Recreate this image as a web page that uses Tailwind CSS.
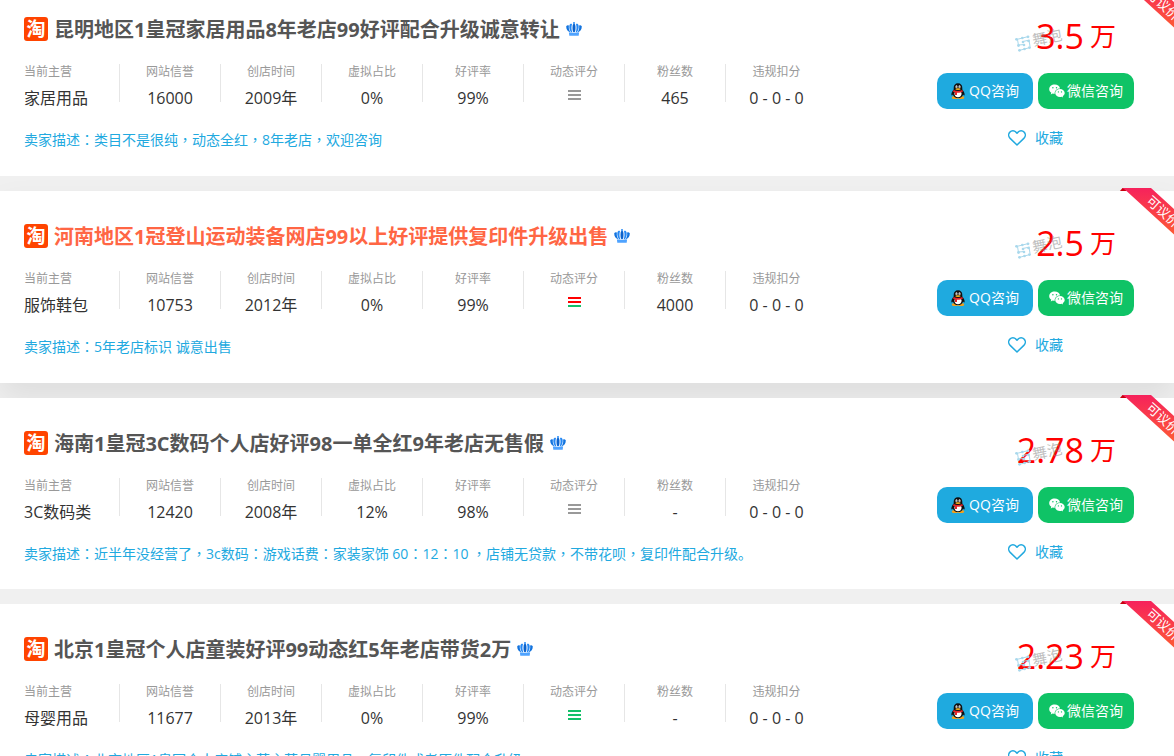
<!DOCTYPE html>
<html lang="zh-CN">
<head>
<meta charset="utf-8">
<meta name="viewport" content="width=device-width, initial-scale=1">
<title>淘宝店铺转让</title>
<script src="https://cdn.jsdelivr.net/npm/@tailwindcss/browser@4"></script>
</head>
<body class="h-screen overflow-hidden bg-[#f0f0f0] font-['Open_Sans','Noto_Sans_CJK_SC',sans-serif] text-[#333]">

<svg class="absolute size-0" aria-hidden="true">
  <symbol id="crown" viewBox="0 0 16 14">
    <path d="M.2 4.300C1.100 3.200 2 3 2.900 3.700 2.500 6.300 3 8.300 4.600 10.200 1.600 9.700.2 7.400.2 4.300zM15.800 4.300c-.9-1.100-1.800-1.300-2.700-.6.4 2.600-.1 4.600-1.700 6.500 3-.5 4.400-2.800 4.400-5.900z" fill="#1273de"/>
    <path d="M3.400 3.500C3.800 2 4.700 1.500 6 2c-.8 3-.7 5.700.3 8.200H5.200C3.600 8.200 3 6 3.400 3.500zM12.600 3.500c-.4-1.500-1.300-2-2.600-1.500.8 3 .7 5.700-.3 8.200h1.100c1.600-2 2.200-4.200 1.800-6.700z" fill="#2488f5"/>
    <ellipse cx="8" cy="6" rx="1.500" ry="4.200" fill="#0b62cc"/>
    <circle cx="8" cy="1.100" r="1" fill="#2488f5"/>
    <path d="M2.900 10.200c1.700.6 8.500.6 10.200 0l-.4 3.500H3.300z" fill="#4fa3ff"/>
  </symbol>
  <symbol id="qq" viewBox="0 0 14 16">
    <ellipse cx="4" cy="14.400" rx="3.200" ry="1.500" fill="#f5a11a"/>
    <ellipse cx="10" cy="14.400" rx="3.200" ry="1.500" fill="#f5a11a"/>
    <path d="M7 .3C4.200.3 2.600 2.400 2.700 5v1.500C1.500 8 .2 10 .4 12c.1.900.9.500 1.500-.6.7 2.400 2.600 3.600 5.100 3.600s4.400-1.200 5.100-3.600c.6 1.100 1.400 1.500 1.500.6.2-2-1.100-4-2.300-5.500V5C11.400 2.400 9.800.3 7 .3z" fill="#101010"/>
    <path d="M7 8.200c-2.200 0-3.600.4-3.600 2.400 0 2.200 1.500 3.700 3.600 3.700s3.600-1.500 3.600-3.700c0-2-1.400-2.400-3.600-2.400z" fill="#fff"/>
    <ellipse cx="5.500" cy="3.700" rx="1" ry="1.500" fill="#fff"/>
    <ellipse cx="8.500" cy="3.700" rx="1" ry="1.500" fill="#fff"/>
    <circle cx="5.800" cy="3.900" r=".5"/><circle cx="8.200" cy="3.900" r=".5"/>
    <ellipse cx="7" cy="6.100" rx="2.700" ry=".9" fill="#f9b21d"/>
    <path d="M2.600 7c2.700 1.300 6.100 1.300 8.800 0l.6 1.500C10.200 9.600 8 9.900 6 9.800v2.100l-2 .1V9.300C3.100 9 2.400 8.700 2 8.400z" fill="#e3252b"/>
  </symbol>
  <symbol id="wechat" viewBox="0 0 16 14">
    <path d="M5.700 .6C2.600.6.200 2.600.2 5.200c0 1.500.8 2.700 2.100 3.600L1.700 10.500l2-1c.7.2 1.400.3 2.100.3-.6-2.800 1.700-5.400 5.300-5.400C10.600 2.200 8.400.6 5.700.6z" fill="#fff"/>
    <path d="M11 5c-2.700 0-4.800 1.700-4.800 4s2.100 4 4.800 4c.6 0 1.100-.1 1.600-.2l1.500.8-.4-1.400c1.200-.8 2-1.900 2-3.200C15.700 6.700 13.600 5 11 5z" fill="#fff"/>
    <g fill="#0fc366"><circle cx="3.900" cy="3.800" r=".75"/><circle cx="7.500" cy="3.800" r=".75"/><circle cx="9.400" cy="7.900" r=".65"/><circle cx="12.500" cy="7.900" r=".65"/></g>
  </symbol>
  <symbol id="heart" viewBox="0 0 18 16">
    <path d="M9 15 1.900 8.100C.3 6.400.3 3.700 1.900 2.100c1.600-1.700 4.400-1.700 6 0L9 3.200l1.100-1.100c1.600-1.700 4.400-1.700 6 0 1.600 1.600 1.600 4.300 0 6z" fill="none" stroke="#21a9df" stroke-width="1.500" stroke-linejoin="round"/>
  </symbol>
  <symbol id="nodes" viewBox="0 0 16 17">
    <g fill="none" stroke="#a9d8ec" stroke-width="1"><path d="M1.500 4.500 13.500 1.500M2.500 4.500l1 6M8 6.500l6.500-1.500M4 10l5-.5M14 5l1 6.500M4 15.500l11-3"/></g>
    <g fill="#a9d8ec"><circle cx="1.500" cy="4.300" r="1.400"/><circle cx="7.300" cy="3" r="1.300"/><circle cx="13" cy="1.800" r="1.400"/><circle cx="8" cy="7" r="1.300"/><circle cx="13.500" cy="6" r="1.300"/><circle cx="3.500" cy="10.500" r="1.400"/><circle cx="9" cy="10" r="1.300"/><circle cx="4.500" cy="15.300" r="1.400"/><circle cx="9.500" cy="14" r="1.300"/><circle cx="14.500" cy="12.600" r="1.400"/></g>
  </symbol>
  <linearGradient id="ribbonFill" x1="0" y1="0" x2="0" y2="1">
    <stop offset="0" stop-color="#f6225c"/><stop offset="1" stop-color="#fd5a35"/>
  </linearGradient>
</svg>

<main id="list" class="-mt-4 flex flex-col gap-[15px]"></main>

<script>
const RED = 'bg-[#ff0000]', GREEN = 'bg-[#13c069]', GRAY = 'bg-[#999]';
const shops = [
  { title: '昆明地区1皇冠家居用品8年老店99好评配合升级诚意转让', price: '3.5', bars: [GRAY, GRAY, GRAY],
    stats: ['家居用品', '16000', '2009年', '0%', '99%', null, '465', '0 - 0 - 0'],
    desc: '类目不是很纯，动态全红，8年老店，欢迎咨询', card: 'pb-[26px]', tone: 'text-[#555]' },
  { title: '河南地区1冠登山运动装备网店99以上好评提供复印件升级出售', price: '2.5', bars: [RED, RED, GREEN],
    stats: ['服饰鞋包', '10753', '2012年', '0%', '99%', null, '4000', '0 - 0 - 0'],
    desc: '5年老店标识 诚意出售', card: 'pb-[26px] shadow-[0_15px_30px_rgba(0,0,0,0.08)]', tone: 'text-[#ff6644]' },
  { title: '海南1皇冠3C数码个人店好评98一单全红9年老店无售假', price: '2.78', bars: [GRAY, GRAY, GRAY],
    stats: ['3C数码类', '12420', '2008年', '12%', '98%', null, '-', '0 - 0 - 0'],
    desc: '近半年没经营了，3c数码：游戏话费：家装家饰 60：12：10 ，店铺无贷款，不带花呗，复印件配合升级。', card: 'pb-[25px]', tone: 'text-[#555]' },
  { title: '北京1皇冠个人店童装好评99动态红5年老店带货2万', price: '2.23', bars: [GREEN, GREEN, GREEN],
    stats: ['母婴用品', '11677', '2013年', '0%', '99%', null, '-', '0 - 0 - 0'],
    desc: '北京地区1皇冠个人店铺主营主营母婴用品，复印件或者原件配合升级', card: 'pb-[26px]', tone: 'text-[#555]' }
];
const labels = ['当前主营', '网站信誉', '创店时间', '虚拟占比', '好评率', '动态评分', '粉丝数', '违规扣分'];

// Colons and commas sit in the middle of their cell.
const centred = s => s.replace(/[：，]/g, m => `<span lang="zh-TW" class="font-['Noto_Sans_CJK_TC'] leading-none">${m}</span>`);

const stat = (shop, i) => `
  <div class="h-[38px] shrink-0 ${i === 0 ? 'w-24 text-left' : 'w-[101px] text-center'} ${i < 7 ? 'border-r border-[#e6e6e6]' : ''}">
    <dt class="text-xs leading-4 text-[#999]">${labels[i]}</dt>
    <dd class="mt-1.5 text-base leading-6 whitespace-nowrap">${shop.stats[i] ?? `
      <span class="flex flex-col items-center gap-0.5 pt-1">${shop.bars.map(c => `<i class="h-0.5 w-[13px] ${c}"></i>`).join('')}</span>`}</dd>
  </div>`;

document.getElementById('list').innerHTML = shops.map(shop => `
<article class="relative flex justify-between bg-white pt-[31px] pr-10 pl-6 ${shop.card}">
  <div class="min-w-0">
    <h2 class="flex h-7 items-center">
      <span class="flex size-6 shrink-0 items-center justify-center rounded-[3px] bg-[#ff4400] text-[19px] leading-6 font-bold text-white">淘</span>
      <a href="#" class="ml-1.5 pt-0.5 text-xl leading-7 font-bold whitespace-nowrap ${shop.tone}">${shop.title}</a>
      <svg class="ml-1.5 h-3.5 w-4 shrink-0"><use href="#crown"/></svg>
    </h2>
    <dl class="mt-[21px] flex">${labels.map((_, i) => stat(shop, i)).join('')}</dl>
    <p class="mt-7 h-5 text-sm leading-5 whitespace-nowrap text-[#21a9df]">${centred('卖家描述：' + shop.desc)}</p>
  </div>
  <div class="flex shrink-0 flex-col">
    <div class="relative flex h-[58px] items-center justify-end gap-1.5 pr-[18px] pb-4 text-[#ff0000]">
      <span class="text-[34px] leading-10">${shop.price}</span>
      <span class="text-[26px] leading-10">万</span>
      <svg class="absolute top-5 left-[78px] h-[17px] w-4"><use href="#nodes"/></svg>
      <span class="absolute top-3 left-[95px] -rotate-12 text-[15px] leading-5 text-[#808080]/50">舞泡</span>
    </div>
    <div class="flex gap-[5px]">
      <button class="flex h-9 w-24 items-center justify-center gap-1 rounded-[10px] bg-[#1faadf] text-sm text-white">
        <svg class="h-4 w-3.5"><use href="#qq"/></svg>QQ咨询</button>
      <button class="flex h-9 w-24 items-center justify-center gap-0.5 rounded-[10px] bg-[#0fc366] text-sm text-white">
        <svg class="h-3.5 w-4"><use href="#wechat"/></svg>微信咨询</button>
    </div>
    <button class="mt-[19px] flex h-5 items-center justify-center gap-[9px] text-sm leading-5 text-[#21a9df]">
      <svg class="h-4 w-[18px]"><use href="#heart"/></svg>收藏</button>
  </div>
  <svg class="absolute -top-[3px] right-0 h-[50px] w-[54px] overflow-hidden" viewBox="0 0 54 50">
    <path d="M0 3 2.500 0H6v3z" fill="#c8000f"/>
    <path d="M2.500 0H31l23 21v25.500L6.500 3z" fill="url(#ribbonFill)"/>
    <text transform="translate(25.500 14) rotate(42)" font-size="13" fill="#fff" font-family="Noto Sans CJK SC, sans-serif">可议价</text>
  </svg>
</article>`).join('');
</script>
</body>
</html>
